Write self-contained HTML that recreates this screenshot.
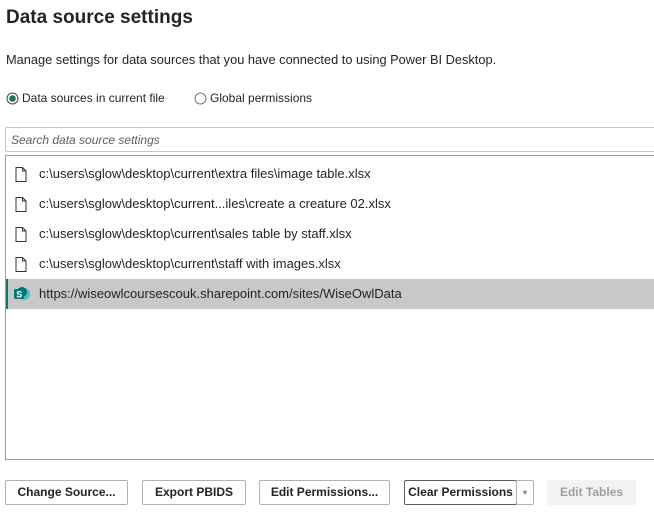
<!DOCTYPE html><html><head><style>
body{margin:0;width:654px;height:513px;background:#fff;font-family:"Liberation Sans",sans-serif;color:#252423;position:relative;overflow:hidden}
.a{position:absolute}
.row{position:absolute;left:6px;width:650px;height:30px;font-size:13px;line-height:30px}
.row span{position:absolute;left:33px}
.btn{position:absolute;top:480px;height:25px;box-sizing:border-box;border:1px solid #b3b0ad;border-radius:2px;font-size:12px;font-weight:bold;line-height:23px;text-align:center;color:#252423;background:#fff}
</style></head><body>
<div class="a" style="left:6px;top:7px;font-size:19px;font-weight:bold">Data source settings</div>
<div class="a" style="left:6px;top:52px;font-size:12.8px">Manage settings for data sources that you have connected to using Power BI Desktop.</div>
<svg class="a" style="left:6px;top:92px" width="13" height="13"><circle cx="6.5" cy="6.5" r="5.5" fill="none" stroke="#444" stroke-width="1"/><circle cx="6.5" cy="6.5" r="3.3" fill="#117865"/></svg>
<div class="a" style="left:22px;top:91px;font-size:12px">Data sources in current file</div>
<svg class="a" style="left:194px;top:92px" width="13" height="13"><circle cx="6.5" cy="6.5" r="5.5" fill="none" stroke="#777" stroke-width="1"/></svg>
<div class="a" style="left:210px;top:91px;font-size:12px">Global permissions</div>
<div class="a" style="left:5px;top:127px;width:660px;height:25px;box-sizing:border-box;border:1px solid #c8c6c4;border-radius:2px"></div>
<div class="a" style="left:11px;top:133px;font-size:12px;font-style:italic;color:#605e5c">Search data source settings</div>
<div class="a" style="left:5px;top:155px;width:660px;height:305px;box-sizing:border-box;border:1px solid #a19f9d"></div>
<div class="row" style="top:159px"><svg class="a" style="left:9px;top:8px" width="12" height="15"><path d="M1 .5h6.5l3.5 3.5v10.5H1z M7.5 .5V4H11" fill="none" stroke="#333"/></svg><span>c:\users\sglow\desktop\current\extra files\image table.xlsx</span></div>
<div class="row" style="top:189px"><svg class="a" style="left:9px;top:8px" width="12" height="15"><path d="M1 .5h6.5l3.5 3.5v10.5H1z M7.5 .5V4H11" fill="none" stroke="#333"/></svg><span>c:\users\sglow\desktop\current...iles\create a creature 02.xlsx</span></div>
<div class="row" style="top:219px"><svg class="a" style="left:9px;top:8px" width="12" height="15"><path d="M1 .5h6.5l3.5 3.5v10.5H1z M7.5 .5V4H11" fill="none" stroke="#333"/></svg><span>c:\users\sglow\desktop\current\sales table by staff.xlsx</span></div>
<div class="row" style="top:249px"><svg class="a" style="left:9px;top:8px" width="12" height="15"><path d="M1 .5h6.5l3.5 3.5v10.5H1z M7.5 .5V4H11" fill="none" stroke="#333"/></svg><span>c:\users\sglow\desktop\current\staff with images.xlsx</span></div>
<div class="row" style="top:279px;background:#c8c8c8;border-left:2px solid #117865;left:6px;width:648px"><svg class="a" style="left:5px;top:7px" width="18" height="16"><circle cx="11" cy="8" r="6" fill="#37c6d0"/><circle cx="9" cy="6" r="5" fill="#036c70"/><rect x="1" y="3" width="10" height="10" rx="1.5" fill="#03787c"/><text x="3.3" y="11.5" font-size="9" font-weight="bold" fill="#fff" font-family="Liberation Sans">S</text></svg><span style="left:31px">https://wiseowlcoursescouk.sharepoint.com/sites/WiseOwlData</span></div>
<div class="btn" style="left:5px;width:123px">Change Source...</div>
<div class="btn" style="left:142px;width:104px">Export PBIDS</div>
<div class="btn" style="left:259px;width:131px">Edit Permissions...</div>
<div class="btn" style="left:404px;width:113px;border-color:#605e5c">Clear Permissions</div>
<div class="btn" style="left:516px;width:18px;font-size:8px;color:#888">▾</div>
<div class="btn" style="left:547px;width:89px;background:#f3f2f1;border-color:#f3f2f1;color:#a19f9d">Edit Tables</div>
</body></html>
